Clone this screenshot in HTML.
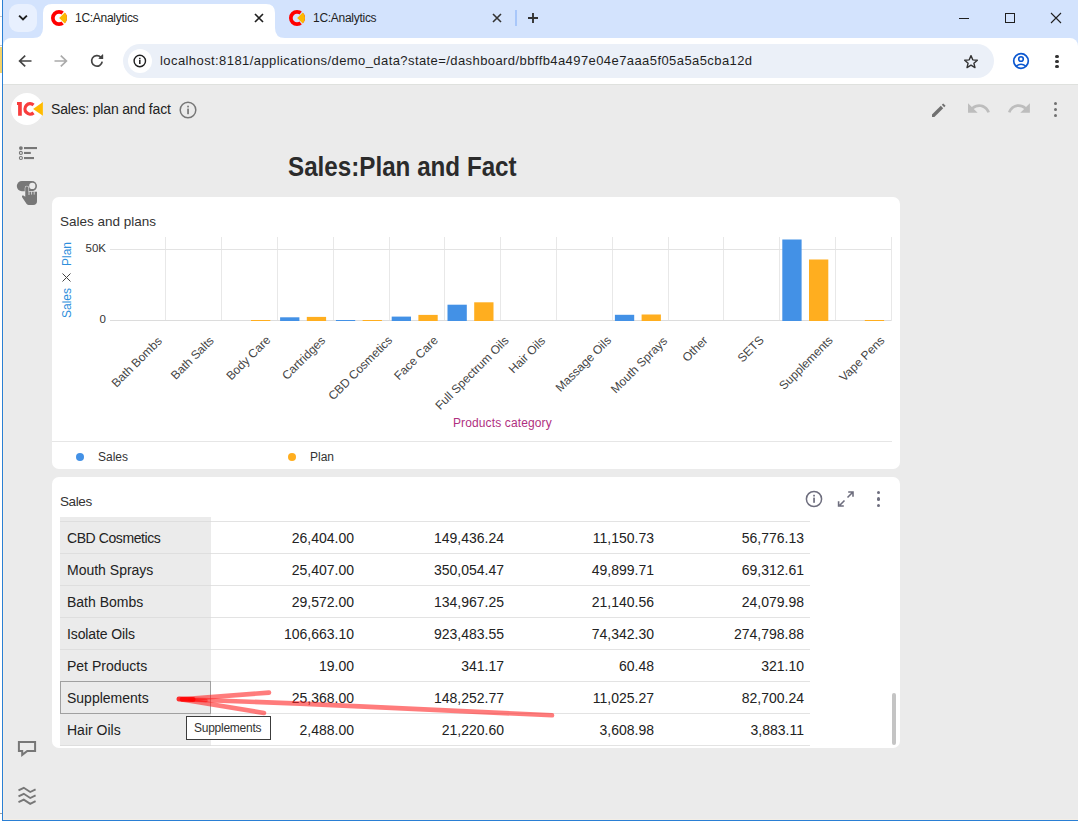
<!DOCTYPE html>
<html><head><meta charset="utf-8">
<style>
*{box-sizing:border-box;margin:0;padding:0}
html,body{width:1078px;height:825px;overflow:hidden;background:#fff;font-family:"Liberation Sans",sans-serif;color:#222}
.a{position:absolute}
#win{position:absolute;left:0;top:0;width:1078px;height:825px;background:#fff}
#tabs{left:3px;top:0;width:1075px;height:46px;background:#d3e3fd}
#toolbar{left:3px;top:38px;width:1075px;height:47px;background:#fff;border-radius:8px 8px 0 0}
#page{left:3px;top:85px;width:1075px;height:734px;background:#ebebeb}
.txt{white-space:nowrap}
.card{background:#fff;border-radius:7px}
</style></head><body>
<div id="win">
  <!-- left strip outside window -->
  <div class="a" style="left:0;top:0;width:2px;height:825px;background:#fff"></div><div class="a" style="left:0;top:813px;width:2px;height:1px;background:#a0a0a0"></div><div class="a" style="left:0;top:16px;width:2px;height:1px;background:#c8c8c8"></div><div class="a" style="left:0;top:45px;width:2px;height:1px;background:#c8c8c8"></div><div class="a" style="left:0;top:47px;width:2px;height:26px;background:#f5d36b"></div>
  <div class="a" id="tabs"></div>
  <div class="a" id="toolbar"></div>
  <div class="a" id="page"></div>

  <!-- tab strip contents -->
  <div class="a" style="left:9px;top:4px;width:28px;height:28px;background:#e8f0fe;border-radius:9px"></div>
  <svg class="a" style="left:16px;top:11px" width="14" height="14" viewBox="0 0 14 14"><path d="M3.1 4.6 L7 8.4 L10.9 4.6" fill="none" stroke="#1f1f1f" stroke-width="1.9"/></svg>
  <svg class="a" style="left:33px;top:4px" width="255" height="34" viewBox="0 0 255 34">
    <path d="M0 34 Q10 34 10 24 L10 9 Q10 0 19 0 L233 0 Q242 0 242 9 L242 24 Q242 34 252 34 Z" fill="#fff"/>
  </svg>
  <svg class="a" style="left:51px;top:10px" width="16" height="16" viewBox="0 0 16 16">
    <circle cx="8" cy="8" r="6.15" fill="none" stroke="#f00" stroke-width="3.7"/>
    <path d="M7.6 8L14.16 0.12L14.16 15.88Z" fill="#fff"/>
    <path d="M8.2 8L13.81 2.58A7.8 7.8 0 0 1 13.81 13.42Z" fill="#fcb900"/>
  </svg>
  <div class="a txt" style="left:75px;top:11px;font-size:12px;color:#1f1f1f;letter-spacing:-0.28px">1C:Analytics</div>
  <svg class="a" style="left:254px;top:13px" width="10" height="10" viewBox="0 0 10 10"><path d="M1 1L9 9M9 1L1 9" stroke="#1f1f1f" stroke-width="1.7"/></svg>
  <svg class="a" style="left:289px;top:10px" width="16" height="16" viewBox="0 0 16 16">
    <circle cx="8" cy="8" r="6.15" fill="none" stroke="#f00" stroke-width="3.7"/>
    <path d="M7.6 8L14.16 0.12L14.16 15.88Z" fill="#d3e3fd"/>
    <path d="M8.2 8L13.81 2.58A7.8 7.8 0 0 1 13.81 13.42Z" fill="#fcb900"/>
  </svg>
  <div class="a txt" style="left:313px;top:11px;font-size:12px;color:#1f1f1f;letter-spacing:-0.28px">1C:Analytics</div>
  <svg class="a" style="left:492px;top:13px" width="10" height="10" viewBox="0 0 10 10"><path d="M1 1L9 9M9 1L1 9" stroke="#333" stroke-width="1.6"/></svg>
  <div class="a" style="left:515px;top:10px;width:2px;height:16px;background:#a8c7fa"></div>
  <svg class="a" style="left:527px;top:12px" width="12" height="12" viewBox="0 0 12 12"><path d="M6 1V11M1 6H11" stroke="#333" stroke-width="1.9"/></svg>
  <!-- window controls -->
  <div class="a" style="left:959px;top:18px;width:10px;height:1px;background:#1f1f1f"></div>
  <div class="a" style="left:1005px;top:13px;width:10px;height:10px;border:1px solid #1f1f1f"></div>
  <svg class="a" style="left:1050px;top:12px" width="12" height="12" viewBox="0 0 12 12"><path d="M1 1L11 11M11 1L1 11" stroke="#1f1f1f" stroke-width="1.1"/></svg>
  <!-- toolbar -->
  <svg class="a" style="left:17px;top:53px" width="16" height="16" viewBox="0 0 16 16"><path d="M14.5 8H3M8.2 2.6L2.6 8L8.2 13.4" fill="none" stroke="#444" stroke-width="1.7"/></svg>
  <svg class="a" style="left:53px;top:53px" width="16" height="16" viewBox="0 0 16 16"><path d="M1.5 8H13M7.8 2.6L13.4 8L7.8 13.4" fill="none" stroke="#aaa" stroke-width="1.7"/></svg>
  <svg class="a" style="left:89px;top:53px" width="16" height="16" viewBox="0 0 16 16"><path d="M13.2 8.6A5.3 5.3 0 1 1 11.8 4.2" fill="none" stroke="#444" stroke-width="1.7"/><path d="M9.3 5.6L14 5.6L14 1" fill="#444" stroke="none"/><path d="M14.2 1.4V6H9.6Z" fill="#444"/></svg>
  <div class="a" style="left:123px;top:44px;width:871px;height:34px;background:#ebf0f8;border-radius:17px"></div>
  <div class="a" style="left:128px;top:49px;width:24px;height:24px;background:#fff;border-radius:12px"></div>
  <svg class="a" style="left:132px;top:53px" width="16" height="16" viewBox="0 0 16 16"><circle cx="7.8" cy="8" r="5.7" fill="none" stroke="#1f1f1f" stroke-width="1.4"/><rect x="7.05" y="7" width="1.5" height="4" fill="#1f1f1f"/><rect x="7.05" y="4.8" width="1.5" height="1.5" fill="#1f1f1f"/></svg>
  <div class="a txt" style="left:160px;top:53px;font-size:13px;color:#1f1f1f;letter-spacing:0.42px">localhost:8181/applications/demo_data?state=/dashboard/bbffb4a497e04e7aaa5f05a5a5cba12d</div>
  <svg class="a" style="left:962px;top:52.5px" width="18" height="17" viewBox="0 0 18 17"><path transform="translate(9 8.6) scale(0.88) translate(-9 -8.6)" d="M9 1.8L11 6.6L16.2 7L12.3 10.4L13.5 15.4L9 12.7L4.5 15.4L5.7 10.4L1.8 7L7 6.6Z" fill="none" stroke="#333" stroke-width="1.6" stroke-linejoin="round"/></svg>
  <svg class="a" style="left:1012px;top:52px" width="18" height="18" viewBox="0 0 18 18"><circle cx="9" cy="9" r="7.3" fill="none" stroke="#0b57d0" stroke-width="1.7"/><circle cx="9" cy="7" r="2.3" fill="none" stroke="#0b57d0" stroke-width="1.6"/><path d="M4.2 14.2Q9 10.4 13.8 14.2" fill="none" stroke="#0b57d0" stroke-width="1.6"/></svg>
  <div class="a" style="left:1055.3px;top:54.5px;width:3.4px;height:3.4px;border-radius:2px;background:#333"></div>
  <div class="a" style="left:1055.3px;top:59.6px;width:3.4px;height:3.4px;border-radius:2px;background:#333"></div>
  <div class="a" style="left:1055.3px;top:64.7px;width:3.4px;height:3.4px;border-radius:2px;background:#333"></div>
  <div class="a" style="left:3px;top:84px;width:1075px;height:1px;background:#dfe1de"></div>

  <!-- app header -->
  <div class="a" style="left:11px;top:93px;width:32px;height:32px;border-radius:16px;background:#fff"></div>
  <svg class="a" style="left:11px;top:93px" width="32" height="32" viewBox="0 0 32 32">
    <path d="M6 9.1H10.8V22.8H7.1V12H6Z" fill="#f83d3d"/>
    <path d="M22.54 11.92A5.2 5.2 0 1 0 22.54 19.88" fill="none" stroke="#f83d3d" stroke-width="3.3"/>
    <path d="M22.1 15.9L31.9 9V22.8Z" fill="#ffbb00"/>
  </svg>
  <div class="a txt" style="left:51px;top:101px;font-size:14px;color:#222;letter-spacing:-0.16px">Sales: plan and fact</div>
  <svg class="a" style="left:178px;top:100px" width="20" height="20" viewBox="0 0 20 20"><circle cx="10" cy="10" r="7.8" fill="none" stroke="#777" stroke-width="1.5"/><rect x="9.2" y="8.6" width="1.7" height="5.6" fill="#777"/><rect x="9.2" y="5.7" width="1.7" height="1.7" fill="#777"/></svg>
  <!-- header right icons -->
  <svg class="a" style="left:929px;top:100px" width="20" height="20" viewBox="0 0 20 20"><path d="M3 14.6V17H5.4L14.2 8.2L11.8 5.8Z" fill="#707070"/><path d="M12.8 4.8L15.2 7.2L16.6 5.8L14.2 3.4Z" fill="#707070"/></svg>
  <svg class="a" style="left:0;top:0" width="1078" height="130" viewBox="0 0 1078 130">
    <path transform="translate(965.86 95.71) scale(1.07)" d="M12.5 8c-2.65 0-5.05.99-6.9 2.6L2 7v9h9l-3.62-3.62c1.39-1.16 3.16-1.88 5.12-1.88 3.54 0 6.55 2.31 7.6 5.5l2.37-.78C21.08 11.03 17.15 8 12.5 8z" fill="#bdbdbd"/>
    <path transform="translate(1006.35 95.71) scale(1.07)" d="M18.4 10.6C16.55 8.99 14.15 8 11.5 8c-4.65 0-8.58 3.03-9.96 7.22L3.9 16c1.05-3.19 4.05-5.5 7.6-5.5 1.950 0 3.73.72 5.12 1.88L13 16h9V7l-3.6 3.6z" fill="#bdbdbd"/>
  </svg>
  <div class="a" style="left:1053.5px;top:101.8px;width:3.6px;height:3.6px;border-radius:2px;background:#707070"></div>
  <div class="a" style="left:1053.5px;top:107.7px;width:3.6px;height:3.6px;border-radius:2px;background:#707070"></div>
  <div class="a" style="left:1053.5px;top:113.6px;width:3.6px;height:3.6px;border-radius:2px;background:#707070"></div>
  <!-- sidebar -->
  <svg class="a" style="left:16px;top:140px" width="24" height="22" viewBox="0 0 24 22">
    <circle cx="4.9" cy="8.1" r="1.9" fill="#777"/><circle cx="4.9" cy="12.9" r="1.5" fill="none" stroke="#777" stroke-width="1.1"/><circle cx="4.9" cy="18" r="1.5" fill="none" stroke="#777" stroke-width="1.1"/>
    <rect x="8" y="7" width="13" height="2.1" fill="#777"/><rect x="8" y="11.9" width="6.8" height="2.1" fill="#777"/><rect x="8" y="17" width="10" height="2.1" fill="#777"/>
  </svg>
  <svg class="a" style="left:16px;top:180px" width="24" height="27" viewBox="0 0 24 27">
    <rect x="0.8" y="1" width="20.2" height="10.2" rx="5.1" fill="#777"/><circle cx="16.3" cy="5.9" r="3.1" fill="#ebebeb"/>
    <path d="M9.3 7.9Q9.3 6.3 10.9 6.3Q12.5 6.3 12.5 7.9V11.8H21V21Q21 25 17 25H13Q11.5 25 10.5 23.8L6 17Q5.6 15.6 6.9 15.2L9.3 16.8Z" fill="#777" stroke="#ebebeb" stroke-width="1.1"/>
    <path d="M9.3 7.9Q9.3 6.3 10.9 6.3Q12.5 6.3 12.5 7.9V11.8H21V21Q21 25 17 25H13Q11.5 25 10.5 23.8L6 17Q5.6 15.6 6.9 15.2L9.3 16.8Z" fill="#777"/>
    <path d="M13 11.3V15M15.6 11.3V14.6M18.2 11.3V14.6" stroke="#ebebeb" stroke-width="0.8"/>
  </svg>
  <svg class="a" style="left:0;top:730px" width="50" height="90" viewBox="0 730 50 90">
    <path d="M18.9 741.9H35.1V750.9H27.3L22.2 754.9V750.9H18.9Z" fill="none" stroke="#777" stroke-width="2"/>
    <path d="M18.5 790.4L23.8 787.8L30.2 792L35.6 789.4M18.5 796.4L23.8 793.8L30.2 798L35.6 795.4M18.5 802.2L23.8 799.6L30.2 803.8L35.6 801.2" fill="none" stroke="#777" stroke-width="1.9"/>
  </svg>
  <!-- dashboard title -->
  <div class="a txt" style="left:288px;top:151px;font-size:27.5px;font-weight:bold;color:#2b2b2b;transform:scaleX(0.88);transform-origin:0 0">Sales:Plan and Fact</div>
  <!-- cards -->
  <div class="a card" style="left:52px;top:197px;width:848px;height:272px"></div>
  <div class="a card" style="left:52px;top:477px;width:848px;height:271px"></div>
<div class="a txt" style="left:60px;top:213.5px;font-size:13.5px;color:#333">Sales and plans</div>
<svg class="a" style="left:0;top:0" width="1078" height="825" viewBox="0 0 1078 825">
<line x1="165.5" y1="237" x2="165.5" y2="321" stroke="#e8e8e8" stroke-width="1"/>
<line x1="221.5" y1="237" x2="221.5" y2="321" stroke="#e8e8e8" stroke-width="1"/>
<line x1="277.5" y1="237" x2="277.5" y2="321" stroke="#e8e8e8" stroke-width="1"/>
<line x1="333.5" y1="237" x2="333.5" y2="321" stroke="#e8e8e8" stroke-width="1"/>
<line x1="389.5" y1="237" x2="389.5" y2="321" stroke="#e8e8e8" stroke-width="1"/>
<line x1="444.5" y1="237" x2="444.5" y2="321" stroke="#e8e8e8" stroke-width="1"/>
<line x1="500.5" y1="237" x2="500.5" y2="321" stroke="#e8e8e8" stroke-width="1"/>
<line x1="556.5" y1="237" x2="556.5" y2="321" stroke="#e8e8e8" stroke-width="1"/>
<line x1="612.5" y1="237" x2="612.5" y2="321" stroke="#e8e8e8" stroke-width="1"/>
<line x1="668.5" y1="237" x2="668.5" y2="321" stroke="#e8e8e8" stroke-width="1"/>
<line x1="723.5" y1="237" x2="723.5" y2="321" stroke="#e8e8e8" stroke-width="1"/>
<line x1="779.5" y1="237" x2="779.5" y2="321" stroke="#e8e8e8" stroke-width="1"/>
<line x1="835.5" y1="237" x2="835.5" y2="321" stroke="#e8e8e8" stroke-width="1"/>
<line x1="891.5" y1="237" x2="891.5" y2="321" stroke="#e8e8e8" stroke-width="1"/>
<line x1="110" y1="249.5" x2="891" y2="249.5" stroke="#e3e3e3" stroke-width="1"/>
<line x1="110" y1="320.5" x2="891" y2="320.5" stroke="#dcdcdc" stroke-width="1"/>
<rect x="251.0" y="320.0" width="19.3" height="1.0" fill="#ffae1f"/>
<rect x="280.1" y="317.3" width="19.3" height="3.7" fill="#4391e6"/>
<rect x="306.8" y="316.9" width="19.3" height="4.1" fill="#ffae1f"/>
<rect x="335.9" y="320.0" width="19.3" height="1.0" fill="#4391e6"/>
<rect x="362.6" y="320.0" width="19.3" height="1.0" fill="#ffae1f"/>
<rect x="391.7" y="316.6" width="19.3" height="4.4" fill="#4391e6"/>
<rect x="418.4" y="314.9" width="19.3" height="6.1" fill="#ffae1f"/>
<rect x="447.5" y="304.7" width="19.3" height="16.3" fill="#4391e6"/>
<rect x="474.2" y="302.3" width="19.3" height="18.7" fill="#ffae1f"/>
<rect x="614.9" y="314.8" width="19.3" height="6.2" fill="#4391e6"/>
<rect x="641.6" y="314.5" width="19.3" height="6.5" fill="#ffae1f"/>
<rect x="782.3" y="239.5" width="19.3" height="81.5" fill="#4391e6"/>
<rect x="809.0" y="259.5" width="19.3" height="61.5" fill="#ffae1f"/>
<rect x="864.8" y="320.0" width="19.3" height="1.0" fill="#ffae1f"/>
<line x1="52" y1="441.5" x2="892" y2="441.5" stroke="#e6e6e6" stroke-width="1"/>
<path d="M62.5 273.5L70.5 281.5M70.5 273.5L62.5 281.5" stroke="#444" stroke-width="1"/>
</svg>
<div class="a txt" style="left:56px;top:242px;width:50px;text-align:right;font-size:11.5px;color:#333">50K</div>
<div class="a txt" style="left:56px;top:313px;width:50px;text-align:right;font-size:11.5px;color:#333">0</div>
<div class="a txt" style="left:54.6px;top:246.5px;width:24.0px;height:14px;line-height:14px;font-size:12px;color:#2f8fdc;transform:rotate(-90deg)">Plan</div>
<div class="a txt" style="left:51.6px;top:295.8px;width:30.0px;height:14px;line-height:14px;font-size:12px;color:#2f8fdc;transform:rotate(-90deg)">Sales</div>
<div class="a txt" style="left:104.0px;top:354.5px;width:65.4px;height:14px;line-height:14px;font-size:12px;color:#444;transform:rotate(-45deg)">Bath Bombs</div>
<div class="a txt" style="left:165.2px;top:350.7px;width:54.7px;height:14px;line-height:14px;font-size:12px;color:#444;transform:rotate(-45deg)">Bath Salts</div>
<div class="a txt" style="left:220.0px;top:351.4px;width:56.7px;height:14px;line-height:14px;font-size:12px;color:#444;transform:rotate(-45deg)">Body Care</div>
<div class="a txt" style="left:276.4px;top:350.9px;width:55.4px;height:14px;line-height:14px;font-size:12px;color:#444;transform:rotate(-45deg)">Cartridges</div>
<div class="a txt" style="left:317.6px;top:361.3px;width:84.7px;height:14px;line-height:14px;font-size:12px;color:#444;transform:rotate(-45deg)">CBD Cosmetics</div>
<div class="a txt" style="left:387.7px;top:351.2px;width:56.0px;height:14px;line-height:14px;font-size:12px;color:#444;transform:rotate(-45deg)">Face Care</div>
<div class="a txt" style="left:422.5px;top:366.0px;width:98.0px;height:14px;line-height:14px;font-size:12px;color:#444;transform:rotate(-45deg)">Full Spectrum Oils</div>
<div class="a txt" style="left:504.3px;top:347.6px;width:46.0px;height:14px;line-height:14px;font-size:12px;color:#444;transform:rotate(-45deg)">Hair Oils</div>
<div class="a txt" style="left:546.8px;top:357.1px;width:72.7px;height:14px;line-height:14px;font-size:12px;color:#444;transform:rotate(-45deg)">Massage Oils</div>
<div class="a txt" style="left:601.9px;top:357.5px;width:74.0px;height:14px;line-height:14px;font-size:12px;color:#444;transform:rotate(-45deg)">Mouth Sprays</div>
<div class="a txt" style="left:679.7px;top:342.0px;width:30.0px;height:14px;line-height:14px;font-size:12px;color:#444;transform:rotate(-45deg)">Other</div>
<div class="a txt" style="left:734.8px;top:342.4px;width:31.3px;height:14px;line-height:14px;font-size:12px;color:#444;transform:rotate(-45deg)">SETS</div>
<div class="a txt" style="left:771.3px;top:356.1px;width:70.0px;height:14px;line-height:14px;font-size:12px;color:#444;transform:rotate(-45deg)">Supplements</div>
<div class="a txt" style="left:833.2px;top:351.8px;width:57.8px;height:14px;line-height:14px;font-size:12px;color:#444;transform:rotate(-45deg)">Vape Pens</div>
<div class="a txt" style="left:453px;top:416px;font-size:12px;color:#b0307f;letter-spacing:0.12px">Products category</div>
<div class="a" style="left:76px;top:453px;width:8px;height:8px;border-radius:4px;background:#4391e6"></div>
<div class="a txt" style="left:98px;top:450px;font-size:12px;color:#333">Sales</div>
<div class="a" style="left:288px;top:453px;width:8px;height:8px;border-radius:4px;background:#ffae1f"></div>
<div class="a txt" style="left:310px;top:450px;font-size:12px;color:#333">Plan</div>
<div class="a txt" style="left:60px;top:493.5px;font-size:13.5px;color:#333;letter-spacing:-0.4px">Sales</div>
<svg class="a" style="left:804px;top:489px" width="20" height="20" viewBox="0 0 20 20"><circle cx="10" cy="10" r="7.6" fill="none" stroke="#6e6e7e" stroke-width="1.5"/><rect x="9.2" y="8.6" width="1.7" height="5.2" fill="#6e6e7e"/><rect x="9.2" y="5.8" width="1.7" height="1.7" fill="#6e6e7e"/></svg>
<svg class="a" style="left:836px;top:489px" width="20" height="20" viewBox="0 0 20 20"><path d="M11.5 8.5L16.2 3.8M12.2 3H17V7.8M8.5 11.5L3.8 16.2M2.6 12.2V17H7.8" fill="none" stroke="#6e6e7e" stroke-width="1.6"/></svg>
<div class="a" style="left:876.5px;top:490.6px;width:3.2px;height:3.2px;border-radius:2px;background:#6e6e7e"></div>
<div class="a" style="left:876.5px;top:497.4px;width:3.2px;height:3.2px;border-radius:2px;background:#6e6e7e"></div>
<div class="a" style="left:876.5px;top:504.2px;width:3.2px;height:3.2px;border-radius:2px;background:#6e6e7e"></div>
<div class="a" style="left:60px;top:517px;width:151px;height:228px;background:#ebebeb"></div>
<svg class="a" style="left:0;top:0" width="1078" height="825" viewBox="0 0 1078 825">
<line x1="60" y1="521.5" x2="211" y2="521.5" stroke="#dedede" stroke-width="1"/>
<line x1="211" y1="521.5" x2="810" y2="521.5" stroke="#e3e3e3" stroke-width="1"/>
<line x1="60" y1="553.5" x2="211" y2="553.5" stroke="#dedede" stroke-width="1"/>
<line x1="211" y1="553.5" x2="810" y2="553.5" stroke="#e3e3e3" stroke-width="1"/>
<line x1="60" y1="585.5" x2="211" y2="585.5" stroke="#dedede" stroke-width="1"/>
<line x1="211" y1="585.5" x2="810" y2="585.5" stroke="#e3e3e3" stroke-width="1"/>
<line x1="60" y1="617.5" x2="211" y2="617.5" stroke="#dedede" stroke-width="1"/>
<line x1="211" y1="617.5" x2="810" y2="617.5" stroke="#e3e3e3" stroke-width="1"/>
<line x1="60" y1="649.5" x2="211" y2="649.5" stroke="#dedede" stroke-width="1"/>
<line x1="211" y1="649.5" x2="810" y2="649.5" stroke="#e3e3e3" stroke-width="1"/>
<line x1="60" y1="681.5" x2="211" y2="681.5" stroke="#dedede" stroke-width="1"/>
<line x1="211" y1="681.5" x2="810" y2="681.5" stroke="#e3e3e3" stroke-width="1"/>
<line x1="60" y1="713.5" x2="211" y2="713.5" stroke="#dedede" stroke-width="1"/>
<line x1="211" y1="713.5" x2="810" y2="713.5" stroke="#e3e3e3" stroke-width="1"/>
<line x1="60" y1="745.5" x2="211" y2="745.5" stroke="#dedede" stroke-width="1"/>
<line x1="211" y1="745.5" x2="810" y2="745.5" stroke="#e3e3e3" stroke-width="1"/>
</svg>
<div class="a txt" style="left:67px;top:530px;font-size:14px;color:#222;letter-spacing:-0.42px">CBD Cosmetics</div>
<div class="a txt" style="left:234px;top:530px;width:120px;text-align:right;font-size:14px;color:#222">26,404.00</div>
<div class="a txt" style="left:384px;top:530px;width:120px;text-align:right;font-size:14px;color:#222">149,436.24</div>
<div class="a txt" style="left:534px;top:530px;width:120px;text-align:right;font-size:14px;color:#222">11,150.73</div>
<div class="a txt" style="left:684px;top:530px;width:120px;text-align:right;font-size:14px;color:#222">56,776.13</div>
<div class="a txt" style="left:67px;top:562px;font-size:14px;color:#222;letter-spacing:0px">Mouth Sprays</div>
<div class="a txt" style="left:234px;top:562px;width:120px;text-align:right;font-size:14px;color:#222">25,407.00</div>
<div class="a txt" style="left:384px;top:562px;width:120px;text-align:right;font-size:14px;color:#222">350,054.47</div>
<div class="a txt" style="left:534px;top:562px;width:120px;text-align:right;font-size:14px;color:#222">49,899.71</div>
<div class="a txt" style="left:684px;top:562px;width:120px;text-align:right;font-size:14px;color:#222">69,312.61</div>
<div class="a txt" style="left:67px;top:594px;font-size:14px;color:#222;letter-spacing:0px">Bath Bombs</div>
<div class="a txt" style="left:234px;top:594px;width:120px;text-align:right;font-size:14px;color:#222">29,572.00</div>
<div class="a txt" style="left:384px;top:594px;width:120px;text-align:right;font-size:14px;color:#222">134,967.25</div>
<div class="a txt" style="left:534px;top:594px;width:120px;text-align:right;font-size:14px;color:#222">21,140.56</div>
<div class="a txt" style="left:684px;top:594px;width:120px;text-align:right;font-size:14px;color:#222">24,079.98</div>
<div class="a txt" style="left:67px;top:626px;font-size:14px;color:#222;letter-spacing:-0.12px">Isolate Oils</div>
<div class="a txt" style="left:234px;top:626px;width:120px;text-align:right;font-size:14px;color:#222">106,663.10</div>
<div class="a txt" style="left:384px;top:626px;width:120px;text-align:right;font-size:14px;color:#222">923,483.55</div>
<div class="a txt" style="left:534px;top:626px;width:120px;text-align:right;font-size:14px;color:#222">74,342.30</div>
<div class="a txt" style="left:684px;top:626px;width:120px;text-align:right;font-size:14px;color:#222">274,798.88</div>
<div class="a txt" style="left:67px;top:658px;font-size:14px;color:#222;letter-spacing:0px">Pet Products</div>
<div class="a txt" style="left:234px;top:658px;width:120px;text-align:right;font-size:14px;color:#222">19.00</div>
<div class="a txt" style="left:384px;top:658px;width:120px;text-align:right;font-size:14px;color:#222">341.17</div>
<div class="a txt" style="left:534px;top:658px;width:120px;text-align:right;font-size:14px;color:#222">60.48</div>
<div class="a txt" style="left:684px;top:658px;width:120px;text-align:right;font-size:14px;color:#222">321.10</div>
<div class="a txt" style="left:67px;top:690px;font-size:14px;color:#222;letter-spacing:0px">Supplements</div>
<div class="a txt" style="left:234px;top:690px;width:120px;text-align:right;font-size:14px;color:#222">25,368.00</div>
<div class="a txt" style="left:384px;top:690px;width:120px;text-align:right;font-size:14px;color:#222">148,252.77</div>
<div class="a txt" style="left:534px;top:690px;width:120px;text-align:right;font-size:14px;color:#222">11,025.27</div>
<div class="a txt" style="left:684px;top:690px;width:120px;text-align:right;font-size:14px;color:#222">82,700.24</div>
<div class="a txt" style="left:67px;top:722px;font-size:14px;color:#222;letter-spacing:0px">Hair Oils</div>
<div class="a txt" style="left:234px;top:722px;width:120px;text-align:right;font-size:14px;color:#222">2,488.00</div>
<div class="a txt" style="left:384px;top:722px;width:120px;text-align:right;font-size:14px;color:#222">21,220.60</div>
<div class="a txt" style="left:534px;top:722px;width:120px;text-align:right;font-size:14px;color:#222">3,608.98</div>
<div class="a txt" style="left:684px;top:722px;width:120px;text-align:right;font-size:14px;color:#222">3,883.11</div>
<div class="a" style="left:60px;top:681px;width:151px;height:33px;border:1px solid #a0a0a0"></div>
<div class="a" style="left:892px;top:693px;width:4px;height:52px;border-radius:2px;background:#c4c4c4"></div>
<div class="a" style="left:186px;top:716px;width:85px;height:24px;border:1px solid #3c3c3c;background:#fff"></div>
<div class="a txt" style="left:194px;top:721px;font-size:12px;color:#333;letter-spacing:-0.25px">Supplements</div>
<svg class="a" style="left:0;top:0" width="1078" height="825" viewBox="0 0 1078 825"><g fill="none" stroke="rgba(255,30,30,0.58)" stroke-linecap="round" stroke-width="4.6"><path d="M552 715.3L300 703.6L182 699.2"/><path d="M182 699.2L269 692.6"/><path d="M182 699.6L264 713"/><path d="M179 698.9L193 699.6" stroke="rgba(255,0,0,0.8)" stroke-width="5"/><path d="M190 699.5L206 700.6" stroke="rgba(255,0,0,0.4)" stroke-width="3.5"/></g></svg>
  <div class="a" style="left:3px;top:85px;width:1px;height:734px;background:#f3eee6"></div>
  <div class="a" style="left:2px;top:819px;width:1076px;height:1px;background:#f3eee6"></div>
  <div class="a" style="left:2px;top:820px;width:1076px;height:1px;background:#2a7fd4"></div>
  <div class="a" style="left:2px;top:0;width:1px;height:821px;background:#2a7fd4"></div>
</div>
</body></html>
